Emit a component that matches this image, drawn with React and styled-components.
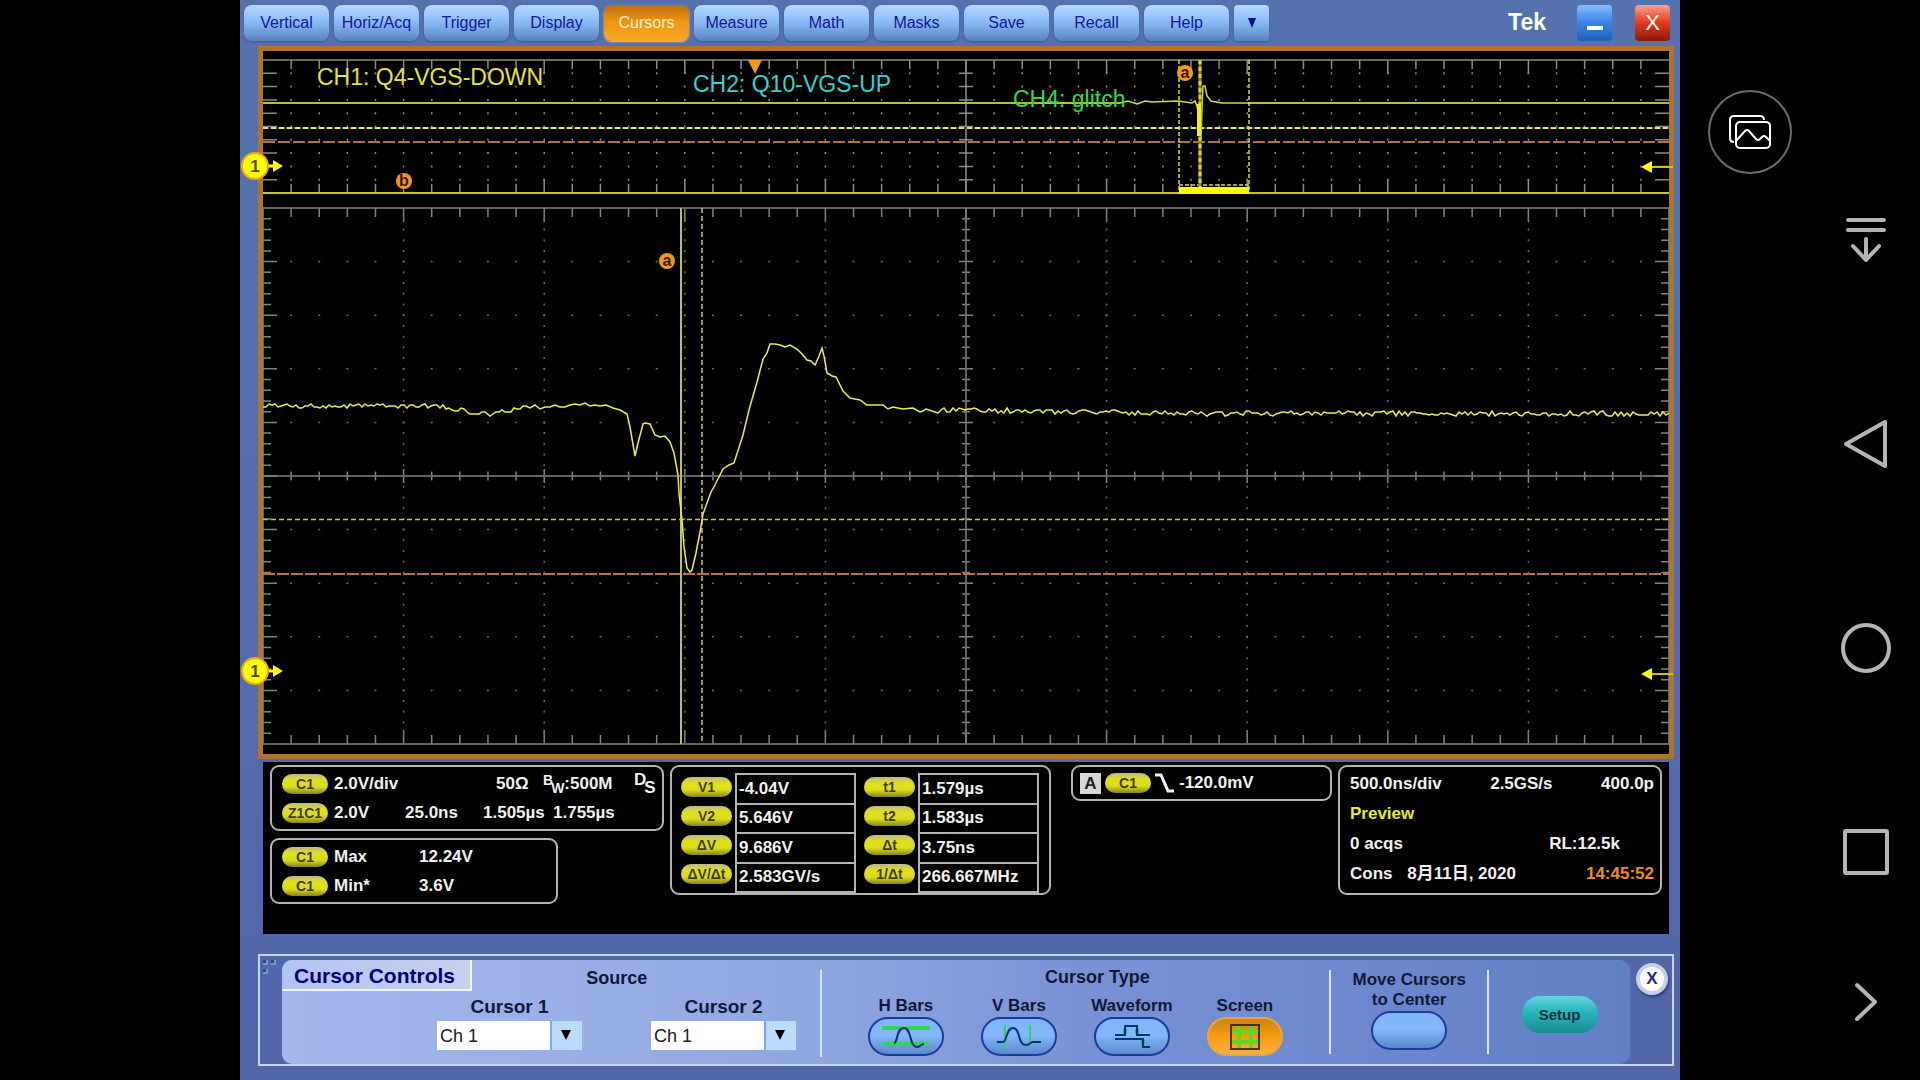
import React, { useState } from "react";
import styled, { createGlobalStyle } from "styled-components";

const menuItems = [
  "Vertical",
  "Horiz/Acq",
  "Trigger",
  "Display",
  "Cursors",
  "Measure",
  "Math",
  "Masks",
  "Save",
  "Recall",
  "Help",
];

const voltReadouts = [
  { name: "V1", value: "-4.04V" },
  { name: "V2", value: "5.646V" },
  { name: "ΔV", value: "9.686V" },
  { name: "ΔV/Δt", value: "2.583GV/s" },
];

const timeReadouts = [
  { name: "t1", value: "1.579µs" },
  { name: "t2", value: "1.583µs" },
  { name: "Δt", value: "3.75ns" },
  { name: "1/Δt", value: "266.667MHz" },
];

// screen area of the two graticules
const LEFT = 263;
const RIGHT = 1669;
const OVER_TOP = 60;
const OVER_BOTTOM = 193;
const ZOOM_TOP = 208;
const ZOOM_BOTTOM = 744;
const MID_X = (LEFT + RIGHT) / 2;
const MID_Y = (ZOOM_TOP + ZOOM_BOTTOM) / 2;
const COL = (RIGHT - LEFT) / 50;

const range = (n) => Array.from({ length: n }, (_, i) => i);

const noise = (i) => {
  const r = Math.sin(i * 127.1) * 43758.5;
  return (r - Math.floor(r) - 0.5) * 5;
};

const flat = (from, to, yFrom, yTo, step) => {
  const count = Math.floor((to - from) / step);
  return range(count).map((i) => [
    from + i * step,
    Math.round(yFrom + ((yTo - yFrom) * i) / count + noise(from + i)),
  ]);
};

const pulse = [
  [600, 406], [606, 405], [613, 408], [620, 410], [627, 414], [630, 427], [635, 456], [638, 443],
  [643, 424], [645, 423], [650, 424], [655, 435], [660, 437], [665, 436], [670, 442], [674, 453],
  [678, 475], [679, 493], [682, 520], [684, 547], [687, 568], [690, 572], [692, 570], [696, 553],
  [700, 532], [703, 514], [711, 492], [715, 485], [723, 469], [729, 465], [734, 463], [743, 435],
  [749, 410], [757, 382], [763, 359], [767, 353], [770, 344], [775, 344], [780, 345], [785, 347],
  [790, 345], [797, 349], [802, 354], [807, 360], [811, 361], [815, 365], [819, 356], [822, 348],
  [824, 356], [827, 373], [832, 376], [836, 377], [843, 391], [850, 398], [860, 400], [867, 405],
  [883, 405], [888, 409], [893, 407], [903, 409], [913, 408],
];

const trace = [
  ...flat(263, 440, 406, 406, 3),
  ...flat(440, 490, 407, 414, 3),
  ...flat(490, 530, 414, 407, 3),
  ...flat(530, 600, 407, 405, 5),
  ...pulse,
  ...flat(920, 1120, 410, 412, 3),
  ...flat(1120, RIGHT + 3, 413, 414, 3),
];

const toPoints = (list) => list.map((p) => p.join(",")).join(" ");

function OverviewGrid() {
  const rowH = (OVER_BOTTOM - OVER_TOP) / 10;
  return (
    <g stroke="#8d8a84" strokeWidth="1.5" fill="none">
      <path d={`M${LEFT} ${OVER_TOP}H${RIGHT} M${MID_X} ${OVER_TOP}V${OVER_BOTTOM}`} />
      {range(49).map((i) => {
        const x = LEFT + (i + 1) * COL;
        const len = (i + 1) % 5 === 0 ? 14 : 9;
        return (
          <g key={i}>
            <path d={`M${x} ${OVER_TOP}v${len} M${x} ${OVER_BOTTOM}v${-len}`} />
            <path
              d={`M${x} ${OVER_TOP + rowH - 1}V${OVER_BOTTOM - 2}`}
              strokeDasharray={`2 ${rowH - 2}`}
            />
          </g>
        );
      })}
      {range(9).map((i) => {
        const y = OVER_TOP + (i + 1) * rowH;
        return <path key={i} d={`M${LEFT} ${y}h14 M${RIGHT} ${y}h-14 M${MID_X - 7} ${y}h14`} />;
      })}
    </g>
  );
}

function ZoomGrid() {
  const rowH = (ZOOM_BOTTOM - ZOOM_TOP) / 50;
  return (
    <g stroke="#85827c" strokeWidth="1.5" fill="none">
      <rect x={LEFT} y={ZOOM_TOP} width={RIGHT - LEFT} height={ZOOM_BOTTOM - ZOOM_TOP} />
      <path d={`M${LEFT} ${MID_Y}H${RIGHT} M${MID_X} ${ZOOM_TOP}V${ZOOM_BOTTOM}`} />
      {range(49).map((i) => {
        const x = LEFT + (i + 1) * COL;
        const major = (i + 1) % 5 === 0;
        const len = major ? 14 : 9;
        return (
          <path
            key={i}
            d={`M${x} ${ZOOM_TOP}v${len} M${x} ${ZOOM_BOTTOM}v${-len} M${x} ${MID_Y - len / 2}v${len}`}
          />
        );
      })}
      {range(49).map((i) => {
        const y = ZOOM_TOP + (i + 1) * rowH;
        const len = (i + 1) % 5 === 0 ? 14 : 8;
        return (
          <path
            key={i}
            d={`M${LEFT} ${y}h${len} M${RIGHT} ${y}h${-len} M${MID_X - len / 2} ${y}h${len}`}
          />
        );
      })}
      {range(9).map((i) => (
        <g key={i} stroke="#6b6964">
          <path
            d={`M${LEFT + (i + 1) * COL * 5} ${ZOOM_TOP + rowH - 1}V${ZOOM_BOTTOM}`}
            strokeDasharray={`2 ${rowH - 2}`}
          />
          <path
            d={`M${LEFT + COL - 1} ${ZOOM_TOP + (i + 1) * rowH * 5}H${RIGHT}`}
            strokeDasharray={`2 ${COL - 2}`}
          />
        </g>
      ))}
    </g>
  );
}

function ChannelMarker({ y }) {
  return (
    <g>
      <path d={`M264 ${y}h12`} stroke="#ffff00" strokeWidth="3" />
      <path d={`M273 ${y - 6}l10 6l-10 6z`} fill="#ffff00" />
      <circle cx="255" cy={y} r="13" fill="#ffff00" stroke="#f0a818" strokeWidth="2" />
      <text x="255" y={y + 6} textAnchor="middle" fontSize="17" fontWeight="bold" fill="#4c4c00">
        1
      </text>
    </g>
  );
}

function LevelArrow({ y }) {
  return (
    <g>
      <path d={`M1650 ${y}H1673`} stroke="#c8c800" strokeWidth="2" />
      <path d={`M1641 ${y}l11 -6v12z`} fill="#ffff00" />
    </g>
  );
}

function CursorBadge({ x, y, children }) {
  return (
    <g>
      <circle cx={x} cy={y} r="8" fill="#f09a1c" />
      <text x={x} y={y + 5} textAnchor="middle" fontSize="16" fontWeight="bold" fill="#3a1400">
        {children}
      </text>
    </g>
  );
}

function Waveforms() {
  return (
    <Plot viewBox="263 51 1406 703" role="img" aria-label="Waveform display">
      <OverviewGrid />
      <ZoomGrid />

      {/* overview */}
      <path d="M263 193H1669" stroke="#c4c43c" strokeWidth="2" />
      <path d="M263 103H1120 M1248 103H1669" stroke="#b4c424" strokeWidth="2" />
      <polyline
        points="1120,103 1128,101 1137,104 1145,101 1152,102 1178,101 1192,103 1195,101 1197,106 1199,118 1201,140 1202,108 1203,86 1205,86 1207,96 1211,101 1222,103 1248,103"
        fill="none"
        stroke="#d8d83c"
        strokeWidth="1.5"
      />
      <path d="M263 128H1669" stroke="#4c4c10" strokeWidth="2" />
      <path d="M263 128H1669" stroke="#dcdc90" strokeWidth="2" strokeDasharray="5 3" />
      <path d="M263 142H1669" stroke="#b07434" strokeWidth="2" strokeDasharray="12 3" />
      <path
        d="M1179 60V193 M1249 60V193 M1179 185H1249"
        stroke="#dcdc3c"
        strokeWidth="1.5"
        strokeDasharray="4 2"
      />
      <path d="M1200 60V193" stroke="#8c8c1c" strokeWidth="3" />
      <path d="M1200 60V193" stroke="#dcdc1c" strokeWidth="3" strokeDasharray="4 3" />
      <path d="M1199 104V136" stroke="#f0f01c" strokeWidth="4" />
      <rect x="1179" y="187" width="70" height="7" fill="#ffff00" />
      <path d="M748 60h14l-7 14z" fill="#f09a1c" />

      <ChannelText x="317" y="85" fill="#e4e43c">CH1: Q4-VGS-DOWN</ChannelText>
      <ChannelText x="693" y="92" fill="#30d4d4">CH2: Q10-VGS-UP</ChannelText>
      <ChannelText x="1013" y="107" fill="#30dc40">CH4: glitch</ChannelText>

      {/* zoomed view */}
      <path d="M263 519.5H1669" stroke="#c8c848" strokeWidth="1.5" strokeDasharray="5 3" />
      <path d="M263 574H1669" stroke="#b87040" strokeWidth="2" strokeDasharray="12 2" />
      <path d="M681 208V744" stroke="#c0c04c" strokeWidth="2" />
      <path d="M702 208V744" stroke="#c8c86c" strokeWidth="1.5" strokeDasharray="5 3" />
      <polyline points={toPoints(trace)} fill="none" stroke="#ecec50" strokeWidth="1.5" />

      <CursorBadge x={1185} y={73}>a</CursorBadge>
      <CursorBadge x={404} y={181}>b</CursorBadge>
      <CursorBadge x={667} y={261}>a</CursorBadge>
      <ChannelMarker y={166} />
      <ChannelMarker y={671} />
      <LevelArrow y={167} />
      <LevelArrow y={674} />
    </Plot>
  );
}

function ReadoutGroup({ items }) {
  return (
    <Group>
      <PillColumn>
        {items.map((item) => (
          <Pill key={item.name}>{item.name}</Pill>
        ))}
      </PillColumn>
      <ValueTable>
        <tbody>
          {items.map((item) => (
            <tr key={item.name}>
              <td>{item.value}</td>
            </tr>
          ))}
        </tbody>
      </ValueTable>
    </Group>
  );
}

function SourcePicker({ id, label }) {
  const [source, setSource] = useState("Ch 1");
  return (
    <Picker>
      <PickerLabel htmlFor={id}>{label}</PickerLabel>
      <SelectBox>
        <Select id={id} value={source} onChange={(e) => setSource(e.target.value)}>
          <option>Ch 1</option>
          <option>Ch 2</option>
          <option>Ch 3</option>
          <option>Ch 4</option>
        </Select>
        <SelectArrow viewBox="0 0 12 12" aria-hidden="true">
          <path d="M0 0H12L6 12Z" fill="#000" />
        </SelectArrow>
      </SelectBox>
    </Picker>
  );
}

const typeIcons = {
  "H Bars": (
    <svg width="48" height="26" viewBox="0 0 48 26" fill="none">
      <path d="M0 4H48 M1 20H47" stroke="#30d850" strokeWidth="4" />
      <path d="M12 19C16 19 14 4 22 4C30 4 27 23 35 23C39 23 39 20 42 20" stroke="#10307c" strokeWidth="2" />
    </svg>
  ),
  "V Bars": (
    <svg width="48" height="26" viewBox="0 0 48 26" fill="none">
      <path d="M10 1V25 M35 1V24" stroke="#30d850" strokeWidth="2" />
      <path d="M2 18H8C12 18 11 4 18 4C26 4 22 21 31 21C36 21 34 18 38 18H46" stroke="#10307c" strokeWidth="2" />
    </svg>
  ),
  Waveform: (
    <svg width="48" height="26" viewBox="0 0 48 26" fill="none">
      <path d="M17 5V10 M29 5V10 M35 15V20" stroke="#30b860" strokeWidth="4" />
      <path d="M7 11H17V2H29V11H42 M7 15H35V23H42" stroke="#10307c" strokeWidth="2" />
    </svg>
  ),
  Screen: (
    <svg width="30" height="26" viewBox="0 0 30 26" fill="none">
      <path d="M9 2V24 M21 2V24 M2 8H28 M2 18H28" stroke="#60d820" strokeWidth="4" />
      <rect x="1" y="1" width="28" height="24" stroke="#503000" strokeWidth="2" />
    </svg>
  ),
};

export default function App() {
  const [menu, setMenu] = useState("Cursors");
  const [cursorType, setCursorType] = useState("Screen");

  return (
    <>
      <GlobalStyle />
      <Page>
        <Scope>
          <Toolbar>
            {menuItems.map((item) => (
              <MenuButton key={item} $active={item === menu} onClick={() => setMenu(item)}>
                {item}
              </MenuButton>
            ))}
            <MoreButton aria-label="More menus">
              <svg width="10" height="11" viewBox="0 0 10 11">
                <path d="M1 1H9L5 11Z" fill="#0c0c8c" />
              </svg>
            </MoreButton>
            <Brand>Tek</Brand>
            <WindowButton aria-label="Minimize">
              <svg width="16" height="4" viewBox="0 0 16 4">
                <rect width="16" height="4" fill="#fff" />
              </svg>
            </WindowButton>
            <WindowButton $danger>X</WindowButton>
          </Toolbar>

          <Frame>
            <Waveforms />
          </Frame>

          <Readouts>
            <Stack>
              <Box>
                <ChannelRow>
                  <Pill>C1</Pill>
                  <span>2.0V/div</span>
                  <span>50Ω</span>
                  <span>
                    <Raised>B</Raised>
                    <Lowered>W</Lowered>:500M
                  </span>
                  <span>
                    <Raised $large>D</Raised>
                    <Lowered $large>S</Lowered>
                  </span>
                </ChannelRow>
                <ZoomRow>
                  <Pill>Z1C1</Pill>
                  <span>2.0V</span>
                  <span>25.0ns</span>
                  <span>1.505µs</span>
                  <span>1.755µs</span>
                </ZoomRow>
              </Box>
              <Box $narrow>
                <MeasureRow>
                  <Pill>C1</Pill>
                  <span>Max</span>
                  <span>12.24V</span>
                </MeasureRow>
                <MeasureRow>
                  <Pill>C1</Pill>
                  <span>Min*</span>
                  <span>3.6V</span>
                </MeasureRow>
              </Box>
            </Stack>

            <CursorBox>
              <ReadoutGroup items={voltReadouts} />
              <ReadoutGroup items={timeReadouts} />
            </CursorBox>

            <TriggerBox>
              <Event>A</Event>
              <Pill>C1</Pill>
              <svg width="20" height="20" viewBox="0 0 20 20" fill="none">
                <path d="M0 2H6L13 18H19" stroke="#f4f4f4" strokeWidth="3" />
              </svg>
              <span>-120.0mV</span>
            </TriggerBox>

            <AcqBox>
              <AcqRow>
                <span>500.0ns/div</span>
                <span>2.5GS/s</span>
                <span>400.0p</span>
              </AcqRow>
              <AcqRow>
                <Preview>Preview</Preview>
              </AcqRow>
              <AcqRow $inset>
                <span>0 acqs</span>
                <span>RL:12.5k</span>
              </AcqRow>
              <AcqRow>
                <span>
                  Cons <DateText>8月11日, 2020</DateText>
                </span>
                <Clock>14:45:52</Clock>
              </AcqRow>
            </AcqBox>
          </Readouts>

          <Controls>
            <Grip viewBox="0 0 14 16" aria-hidden="true">
              <path d="M0 5H4V1 M8 5H12V1 M0 14H4V10" fill="none" stroke="#7c94c8" strokeWidth="2" />
              <path d="M0 1H3V4H0Z M8 1H11V4H8Z M0 10H3V13H0Z" fill="#2c4484" />
            </Grip>
            <ControlBody>
              <SourceSection>
                <SourceHead>
                  <PanelTitle>Cursor Controls</PanelTitle>
                  <SourceTitle>Source</SourceTitle>
                </SourceHead>
                <Pickers>
                  <SourcePicker id="cursor-1" label="Cursor 1" />
                  <SourcePicker id="cursor-2" label="Cursor 2" />
                </Pickers>
              </SourceSection>

              <TypeSection>
                <TypeTitle>Cursor Type</TypeTitle>
                <TypeRow>
                  {Object.keys(typeIcons).map((type) => (
                    <TypeOption key={type}>
                      <Caption htmlFor={type}>{type}</Caption>
                      <RoundButton
                        id={type}
                        $active={type === cursorType}
                        aria-pressed={type === cursorType}
                        onClick={() => setCursorType(type)}
                      >
                        {typeIcons[type]}
                      </RoundButton>
                    </TypeOption>
                  ))}
                </TypeRow>
              </TypeSection>

              <MoveSection>
                <Caption htmlFor="center">
                  Move Cursors
                  <br />
                  to Center
                </Caption>
                <RoundButton id="center" />
              </MoveSection>

              <SetupSection>
                <SetupButton>Setup</SetupButton>
              </SetupSection>
            </ControlBody>
            <CloseButton>X</CloseButton>
          </Controls>
        </Scope>

        <Side>
          <GalleryButton aria-label="Gallery">
            <svg width="42" height="34" viewBox="0 0 42 34" fill="none" stroke="#fff" strokeWidth="2">
              <path d="M5 27C2 27 1 26 1 23V5C1 2 2 1 5 1H31C34 1 35 2 35 5" />
              <rect x="7" y="7" width="34" height="26" rx="4" />
              <path d="M7 26L16 16Q18 14 20 16L27 24Q29 26 31 24L33 22Q35 20 37 22L41 26" />
            </svg>
          </GalleryButton>
          <Nav>
            <NavButton aria-label="Hide navigation">
              <svg width="44" height="48" viewBox="0 0 44 48">
                <path d="M4 4H40 M4 14H40 M22 23V44 M9 30L22 44L35 30" />
              </svg>
            </NavButton>
            <NavButton aria-label="Back">
              <svg width="46" height="52" viewBox="0 0 46 52">
                <path d="M3 26L42 4V48Z" />
              </svg>
            </NavButton>
            <NavButton aria-label="Home">
              <svg width="52" height="52" viewBox="0 0 52 52">
                <circle cx="26" cy="26" r="23" />
              </svg>
            </NavButton>
            <NavButton aria-label="Recent apps">
              <svg width="48" height="48" viewBox="0 0 48 48">
                <rect x="3" y="3" width="42" height="42" rx="1" />
              </svg>
            </NavButton>
            <NavButton aria-label="Next">
              <svg width="26" height="42" viewBox="0 0 26 42">
                <path d="M4 4L22 21L4 38" />
              </svg>
            </NavButton>
          </Nav>
        </Side>
      </Page>
    </>
  );
}

const GlobalStyle = createGlobalStyle`
  * {
    box-sizing: border-box;
  }

  body {
    margin: 0;
    background: #000;
    font-family: "Liberation Sans", "Noto Sans CJK SC", sans-serif;
  }

  button {
    padding: 0;
    border: none;
    font-family: inherit;
    cursor: pointer;
  }
`;

const Page = styled.div`
  display: grid;
  grid-template-columns: 1fr 6fr 1fr;
  min-height: 100vh;
  background: #000;
`;

const Scope = styled.main`
  display: flex;
  flex-direction: column;
  grid-column: 2;
  padding: 0 6px 14px 18px;
  background: linear-gradient(#5472ae, #5266aa);
`;

const Toolbar = styled.nav`
  display: flex;
  gap: 5px;
  margin-left: -14px;
  padding: 5px 4px 5px 0;
`;

const MenuButton = styled.button`
  flex: 0 1 85px;
  height: 36px;
  border-radius: 8px;
  font-size: 16px;
  color: ${(props) => (props.$active ? "#fff4dc" : "#14149c")};
  background: ${(props) =>
    props.$active
      ? "linear-gradient(#b87010, #f09410 45%, #fca828)"
      : "linear-gradient(#b4d8ff, #8cbcf8 45%, #5884bc)"};
  box-shadow: 0 1px 2px ${(props) => (props.$active ? "#fcc468" : "#3c588c")};
`;

const MoreButton = styled(MenuButton)`
  flex: 0 0 35px;
  border-radius: 4px;
`;

const Brand = styled.span`
  margin: 0 26px 0 auto;
  color: #fff;
  font-size: 23px;
  font-weight: bold;
  line-height: 34px;
`;

const WindowButton = styled.button`
  flex: 0 0 35px;
  height: 36px;
  border-radius: 4px;
  color: #fff;
  font-size: 22px;
  background: ${(props) =>
    props.$danger
      ? "linear-gradient(#f8a498, #e84020 45%, #8c1808)"
      : "linear-gradient(#84bcfc, #3c88ec 45%, #2060b4)"};

  & + & {
    margin-left: 18px;
  }

  svg {
    margin-top: 12px;
  }
`;

const Frame = styled.section`
  border: 5px solid #b07428;
  background: #000;
`;

const Plot = styled.svg`
  display: block;
  width: 100%;
  height: auto;
  overflow: visible;
`;

const ChannelText = styled.text`
  font-size: 23px;
`;

const Readouts = styled.section`
  display: grid;
  grid-template-columns: 394fr 381fr 275fr 324fr;
  column-gap: 6px;
  align-items: start;
  flex: 1;
  min-height: 172px;
  margin: 3px 5px 0;
  padding: 3px 7px;
  background: #000;
  color: #f0f0f0;
  font-size: 17px;
  font-weight: bold;
`;

const Stack = styled.div`
  display: grid;
  gap: 7px;
`;

const Box = styled.div`
  width: ${(props) => (props.$narrow ? "73%" : "100%")};
  padding: 2px 6px 2px 10px;
  border: 2px solid #b4b4b4;
  border-radius: 9px;
  white-space: nowrap;
`;

const Row = styled.div`
  display: grid;
  align-items: center;
  height: 29px;
`;

const ChannelRow = styled(Row)`
  grid-template-columns: 52px 162px 47px 91px auto;
`;

const ZoomRow = styled(Row)`
  grid-template-columns: 52px 71px 78px 70px auto;
`;

const MeasureRow = styled(Row)`
  grid-template-columns: 52px 85px auto;
`;

const Pill = styled.span`
  width: 46px;
  height: 20px;
  border-radius: 10px;
  background: linear-gradient(#b8b890, #e0e018 30%, #dcdc20 65%, #84841c);
  color: #3c3c00;
  font-size: 14px;
  line-height: 20px;
  text-align: center;
`;

const Raised = styled.sup`
  font-size: ${(props) => (props.$large ? 17 : 14)}px;
  line-height: 0;
  vertical-align: 4px;
`;

const Lowered = styled.sub`
  margin-left: -2px;
  font-size: ${(props) => (props.$large ? 17 : 14)}px;
  line-height: 0;
  vertical-align: -4px;
`;

const CursorBox = styled(Box)`
  display: flex;
  gap: 8px;
  height: 130px;
  padding: 6px 10px 0 9px;
`;

const Group = styled.div`
  display: flex;
  flex: 0 1 175px;
  gap: 3px;
`;

const PillColumn = styled.div`
  display: flex;
  flex-direction: column;
  gap: 9px;
  padding-top: 4px;

  ${Pill} {
    width: 51px;
  }
`;

const ValueTable = styled.table`
  flex: 1;
  height: 120px;
  border-collapse: collapse;

  td {
    height: 29px;
    padding: 0 2px;
    border: 2px solid #b4b4b4;
  }
`;

const TriggerBox = styled(Box)`
  display: flex;
  align-items: center;
  gap: 4px;
  width: auto;
  height: 36px;
  margin-left: 14px;
  padding: 0 7px;
`;

const Event = styled.span`
  width: 21px;
  height: 21px;
  background: #d8d8d8;
  color: #202020;
  line-height: 21px;
  text-align: center;
`;

const AcqBox = styled(Box)`
  height: 130px;
`;

const AcqRow = styled.div`
  display: flex;
  align-items: baseline;
  justify-content: space-between;
  height: 30px;
  padding-right: ${(props) => (props.$inset ? "34px" : 0)};
  line-height: 29px;
`;

const Preview = styled.span`
  color: #ecec20;
`;

const DateText = styled.time`
  margin-left: 10px;
`;

const Clock = styled.time`
  color: #f08c1c;
`;

const Controls = styled.section`
  display: flex;
  align-items: flex-start;
  height: 112px;
  margin-top: 20px;
  border: 2px solid #c4d4f4;
`;

const Grip = styled.svg`
  flex: 0 0 14px;
  height: 16px;
  margin: 3px 5px 0 3px;
`;

const ControlBody = styled.div`
  display: grid;
  grid-template-columns: 538fr 510fr 158fr 143fr;
  flex: 1;
  height: 104px;
  margin-top: 4px;
  border-radius: 10px;
  background: linear-gradient(90deg, #a4b8ec, #90a8e0 38%, #7890d4 62%, #6080c4);
  color: #101838;
  font-weight: bold;
  overflow: hidden;
`;

const SourceSection = styled.div`
  display: flex;
  flex-direction: column;
`;

const SourceHead = styled.div`
  display: flex;
  height: 36px;
`;

const PanelTitle = styled.h2`
  width: 190px;
  height: 31px;
  margin: 0;
  padding-left: 12px;
  border-right: 2px solid #f0f4ff;
  border-bottom: 2px solid #f0f4ff;
  background: linear-gradient(90deg, #b0c4f4, #c8d0ec);
  color: #00007c;
  font-size: 21px;
  line-height: 31px;
`;

const SourceTitle = styled.div`
  flex: 1;
  padding: 8px 58px 0 0;
  font-size: 18px;
  text-align: center;
`;

const Pickers = styled.div`
  display: flex;
  gap: 69px;
  margin-left: 155px;
`;

const Picker = styled.div`
  flex: 0 1 145px;
`;

const PickerLabel = styled.label`
  display: block;
  height: 25px;
  font-size: 19px;
  line-height: 22px;
  text-align: center;
`;

const SelectBox = styled.div`
  position: relative;
`;

const Select = styled.select`
  display: block;
  width: 100%;
  height: 29px;
  padding: 0 32px 0 3px;
  border: none;
  border-radius: 0;
  appearance: none;
  background: linear-gradient(90deg, #fff calc(100% - 32px), #78a8ec calc(100% - 32px), #78a8ec calc(100% - 30px), #bcdcff calc(100% - 30px));
  color: #202020;
  font-family: inherit;
  font-size: 18px;
`;

const SelectArrow = styled.svg`
  position: absolute;
  top: 8px;
  right: 11px;
  width: 10px;
  height: 12px;
  pointer-events: none;
`;

const DividedSection = styled.div`
  margin: 10px 0;
  border-left: 2px solid #dce4fc;
`;

const TypeSection = styled(DividedSection)`
  display: flex;
  flex-direction: column;
  margin-bottom: 7px;
`;

const TypeTitle = styled.div`
  height: 26px;
  padding-left: 44px;
  font-size: 18px;
  line-height: 14px;
  text-align: center;
`;

const TypeRow = styled.div`
  display: flex;
  justify-content: center;
`;

const TypeOption = styled.div`
  display: flex;
  flex: 0 1 113px;
  flex-direction: column;
  align-items: center;
`;

const Caption = styled.label`
  margin-bottom: 1px;
  font-size: 17px;
  line-height: 20px;
  text-align: center;
`;

const RoundButton = styled.button`
  display: flex;
  align-items: center;
  justify-content: center;
  width: 76px;
  height: 39px;
  border: 2px solid ${(props) => (props.$active ? "#f0a434" : "#1c3c9c")};
  border-radius: 20px;
  background: ${(props) =>
    props.$active
      ? "linear-gradient(#c88414, #f89c10 50%, #f8b040)"
      : "linear-gradient(#80b4f8, #84b8fc 45%, #5c88cc)"};
`;

const MoveSection = styled(DividedSection)`
  display: flex;
  flex-direction: column;
  align-items: center;
`;

const SetupSection = styled(DividedSection)`
  display: flex;
  align-items: center;
  justify-content: center;
  padding-top: 4px;
`;

const SetupButton = styled.button`
  width: 76px;
  height: 37px;
  border-radius: 18px;
  background: linear-gradient(#64d4e0, #2cb8c0 40%, #148c90);
  color: #0c3038;
  font-size: 15px;
  font-weight: bold;
`;

const CloseButton = styled.button`
  width: 32px;
  height: 32px;
  margin: 7px 4px 0 6px;
  border: 4px solid #c8d0e4;
  border-radius: 50%;
  background: #fff;
  color: #1c2c8c;
  font-size: 17px;
  font-weight: bold;
  line-height: 24px;
  box-shadow: 1px 2px 3px #2c3c74;
`;

const Side = styled.aside`
  display: grid;
  grid-template-columns: 1fr 1fr;
`;

const GalleryButton = styled.button`
  display: flex;
  align-items: center;
  justify-content: center;
  width: 84px;
  height: 84px;
  margin: 90px 0 0 28px;
  border: 2px solid #6c6c6c;
  border-radius: 50%;
  background: #000;
`;

const Nav = styled.nav`
  display: grid;
  grid-template-rows: 204fr 204fr 204fr 204fr 96fr;
  padding: 138px 0 30px 12px;
`;

const NavButton = styled.button`
  display: flex;
  align-items: center;
  justify-content: center;
  background: none;

  svg {
    fill: none;
    stroke: #b4b4b4;
    stroke-width: 4px;
    stroke-linecap: round;
    stroke-linejoin: round;
  }
`;
